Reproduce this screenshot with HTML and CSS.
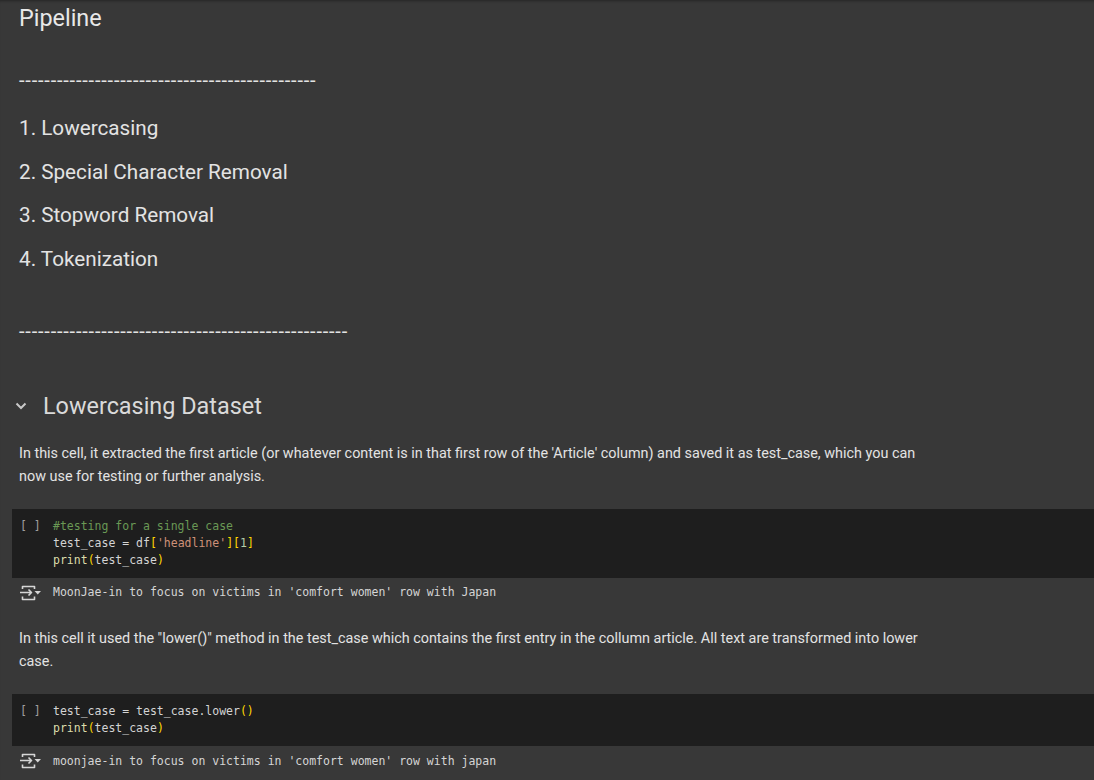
FILE: index.html
```html
<!DOCTYPE html>
<html>
<head>
<meta charset="utf-8">
<link rel="stylesheet" href="styles.css">
</head>
<body>
<div class="notebook">
  <section class="md-cell pipeline">
    <h2 class="title">Pipeline</h2>
    <p class="dashes dashes-1">-----------------------------------------------</p>
    <ol class="steps">
      <li>1. Lowercasing</li>
      <li>2. Special Character Removal</li>
      <li>3. Stopword Removal</li>
      <li>4. Tokenization</li>
    </ol>
    <p class="dashes dashes-2">----------------------------------------------------</p>
  </section>

  <section class="md-cell section-head">
    <svg class="chevron" width="12" height="8" viewBox="0 0 12 8"><path d="M1.5 1.5 L6 6 L10.5 1.5" fill="none" stroke="#c8c8c8" stroke-width="2"/></svg>
    <h3 class="heading">Lowercasing Dataset</h3>
  </section>

  <section class="md-cell text">
    <p>In this cell, it extracted the first article (or whatever content is in that first row of the 'Article' column) and saved it as test_case, which you can now use for testing or further analysis.</p>
  </section>

  <section class="code-cell">
    <div class="code-row">
      <span class="run">[ ]</span>
      <pre class="code"><span class="c">#testing for a single case</span>
test_case = df<span class="b">[</span><span class="s">'headline'</span><span class="b">][</span><span class="n">1</span><span class="b">]</span>
<span class="f">print</span><span class="b">(</span>test_case<span class="b">)</span></pre>
    </div>
    <div class="out-row">
      <svg class="out-icon" width="22" height="16" viewBox="0 0 22 16"><path d="M2.5 4 V1.5 H14.5 V4 M2.5 11.5 V14.5 H14.5 V11.5 M0 7.5 H11.5 M8.5 4.5 L11.5 7.5 L8.5 10.5" fill="none" stroke="#d6d6d6" stroke-width="1.6" stroke-linejoin="round"/><path d="M14.5 6 H21 L17.75 9.5 Z" fill="#d6d6d6"/></svg>
      <pre class="output">MoonJae-in to focus on victims in 'comfort women' row with Japan</pre>
    </div>
  </section>

  <section class="md-cell text text-2">
    <p>In this cell it used the "lower()" method in the test_case which contains the first entry in the collumn article. All text are transformed into lower case.</p>
  </section>

  <section class="code-cell">
    <div class="code-row">
      <span class="run">[ ]</span>
      <pre class="code">test_case = test_case.lower<span class="b">()</span>
<span class="f">print</span><span class="b">(</span>test_case<span class="b">)</span></pre>
    </div>
    <div class="out-row">
      <svg class="out-icon" width="22" height="16" viewBox="0 0 22 16"><path d="M2.5 4 V1.5 H14.5 V4 M2.5 11.5 V14.5 H14.5 V11.5 M0 7.5 H11.5 M8.5 4.5 L11.5 7.5 L8.5 10.5" fill="none" stroke="#d6d6d6" stroke-width="1.6" stroke-linejoin="round"/><path d="M14.5 6 H21 L17.75 9.5 Z" fill="#d6d6d6"/></svg>
      <pre class="output">moonjae-in to focus on victims in 'comfort women' row with japan</pre>
    </div>
  </section>
</div>
</body>
</html>
```

FILE: styles.css
```css
* { box-sizing: border-box; }
html, body {
  margin: 0;
  padding: 0;
  background: #383838;
}
body {
  font-family: Roboto, "Noto Sans", sans-serif;
  color: #e3e3e3;
  height: 780px;
  overflow: hidden;
}
.notebook {
  box-shadow: inset 0 3px 3px -2px rgba(0,0,0,0.35);
  min-height: 780px;
}
.md-cell {
  padding-left: 19px;
}
.title {
  margin: 0;
  font-size: 23.4px;
  font-weight: 400;
  line-height: 36px;
  color: #e8e8e8;
}
.dashes {
  margin: 0;
  font-size: 20px;
  letter-spacing: 0.8px;
  line-height: 24px;
  color: #e3e3e3;
  white-space: nowrap;
}
.dashes-1 { margin-top: 32px; }
.steps {
  list-style: none;
  margin: 24px 0 0;
  padding: 0;
  display: flex;
  flex-direction: column;
  gap: 19.5px;
}
.steps li {
  font-size: 20.7px;
  line-height: 24px;
  color: #e3e3e3;
}
.dashes-2 { margin-top: 48px; }

.section-head {
  display: flex;
  align-items: center;
  margin-top: 47px;
  padding-left: 15px;
  height: 32px;
}
.chevron { margin-right: 16px; }
.heading {
  margin: 0;
  font-size: 23.4px;
  font-weight: 400;
  line-height: 32px;
  color: #dadada;
}
.text p {
  margin: 20px 0 0;
  width: 915px;
  font-size: 14.4px;
  line-height: 23px;
  color: #e3e3e3;
}
.text-2 p { margin-top: 19.5px; }

.code-cell {
  margin-top: 21px;
}
.code-row {
  margin-left: 12px;
  background: #1e1e1e;
  display: flex;
  padding: 9px 0;
}
.run {
  font-family: "DejaVu Sans Mono", "Liberation Mono", monospace;
  font-size: 11.5px;
  line-height: 17px;
  color: #a0a0a0;
  width: 41px;
  padding-left: 8px;
  white-space: pre;
}
pre {
  margin: 0;
  font-family: "DejaVu Sans Mono", "Liberation Mono", monospace;
  font-size: 11.5px;
  line-height: 17px;
}
.code { color: #d4d4d4; }
.c { color: #6a9955; }
.s { color: #ce9178; }
.b { color: #ffd700; }
.n { color: #b5cea8; }
.f { color: #dcdcaa; }
.out-row {
  display: flex;
  align-items: center;
  height: 30px;
  padding-left: 20px;
}
.out-icon { margin-right: 11px; flex: none; }
.output { color: #d5d5d5; }
```
